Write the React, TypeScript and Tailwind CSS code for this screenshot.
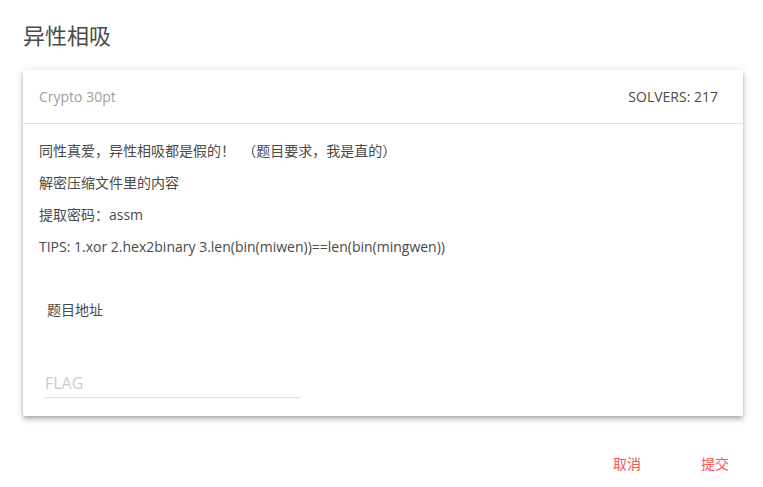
export default function App() {
  return (
    <div
      className="min-h-screen bg-white text-[#4a4a4a]"
      style={{ fontFamily: '"Open Sans", "Noto Sans CJK SC", sans-serif' }}
    >
      <div className="px-[23px] pt-[19px]">
        <h1 className="text-[22px] leading-[32px] text-[#4a4a4a]">异性相吸</h1>
      </div>

      <div className="ml-[23px] mr-[20px] mt-[19px] rounded-[2px] bg-white shadow-[0_2px_4px_-1px_rgba(0,0,0,0.2),0_4px_5px_0_rgba(0,0,0,0.14),0_1px_10px_0_rgba(0,0,0,0.12)]">
        <div className="flex h-[54px] items-center justify-between border-b border-[#e0e0e0] pl-[16px] pr-[25px] text-[14px]">
          <span className="text-[#9e9e9e]">Crypto 30pt</span>
          <span className="text-[#4a4a4a]">SOLVERS: 217</span>
        </div>

        <div className="px-[16px] pt-[11px] text-[14px] text-[#4a4a4a]">
          <p className="leading-[32px]">同性真爱，异性相吸都是假的！&nbsp;&nbsp;（题目要求，我是直的）</p>
          <p className="leading-[32px]">解密压缩文件里的内容</p>
          <p className="leading-[32px]">提取密码：assm</p>
          <p className="leading-[32px]">TIPS: 1.xor 2.hex2binary 3.len(bin(miwen))==len(bin(mingwen))</p>

          <div className="mt-[37px] px-[8px] leading-[20px]">题目地址</div>

          <div className="mt-[51px] w-[262px] pb-[18px] pl-[6px]">
            <input
              className="w-full border-b border-[#e0e0e0] bg-transparent pb-[2px] text-[16px] outline-none placeholder:text-[#cccccc]"
              placeholder="FLAG"
            />
          </div>
        </div>
      </div>

      <div className="flex justify-end pr-[4px] pt-[29px] text-[14px] text-[#ff5252]">
        <button className="h-[36px] min-w-[88px] px-[16px]">取消</button>
        <button className="h-[36px] min-w-[88px] px-[16px]">提交</button>
      </div>
    </div>
  );
}
